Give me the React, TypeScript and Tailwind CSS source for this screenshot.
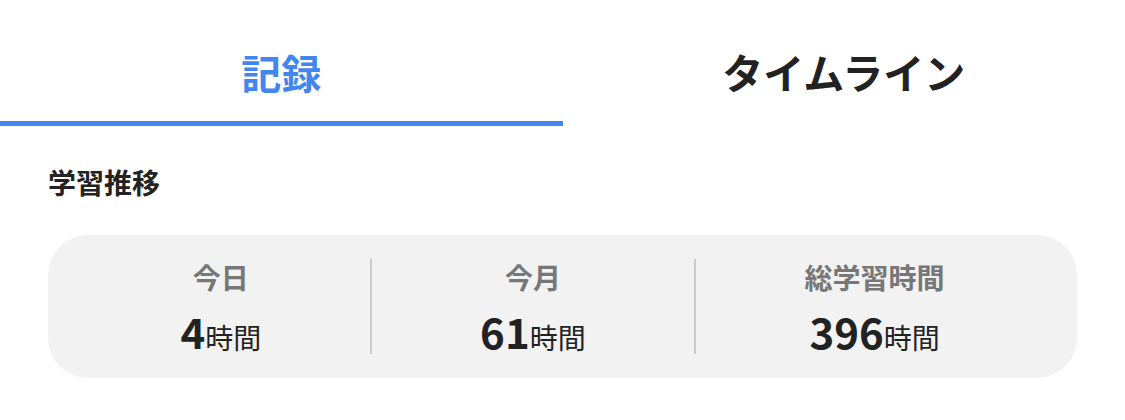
import React from 'react';

interface Stat {
    label: string;
    value: number;
}

const stats: Stat[] = [
    { label: '今日', value: 4 },
    { label: '今月', value: 61 },
    { label: '総学習時間', value: 396 },
];

const font = { fontFamily: '"Noto Sans CJK JP", "Noto Sans", sans-serif' };

export default function App() {
    return (
        <div className="w-[1125px] h-[420px] bg-white" style={font}>
            <div className="flex">
                <div className="flex-1 flex flex-col">
                    <div className="h-[121px] pt-[22px] flex items-center justify-center text-[40px] font-bold text-[#4287f0]">
                        記録
                    </div>
                    <div className="h-[5px] bg-[#4287f0]" />
                </div>
                <div className="flex-1 flex flex-col">
                    <div className="h-[121px] pt-[22px] flex items-center justify-center text-[41px] font-bold text-[#222222]">
                        タイムライン
                    </div>
                    <div className="h-[5px]" />
                </div>
            </div>

            <div className="px-12 pt-[35px]">
                <h2 className="text-[28px] leading-[42px] font-bold text-[#222222]">学習推移</h2>

                <div className="mt-[32px] bg-[#f2f2f2] rounded-[40px] px-6 py-6 flex">
                    {stats.map((stat, i) => (
                        <div
                            key={stat.label}
                            className={`flex-auto flex flex-col items-center ${i > 0 ? 'border-l-2 border-[#cccccc]' : ''}`}
                        >
                            <div className="text-[28px] leading-[36px] font-semibold text-[#777777]">{stat.label}</div>
                            <div className="mt-[10px] h-[49px] flex items-baseline justify-center text-[#222222]">
                                <span className="text-[42px] leading-[51px] font-bold">{stat.value}</span>
                                <span className="text-[28px] leading-[51px]">時間</span>
                            </div>
                        </div>
                    ))}
                </div>
            </div>
        </div>
    );
}
